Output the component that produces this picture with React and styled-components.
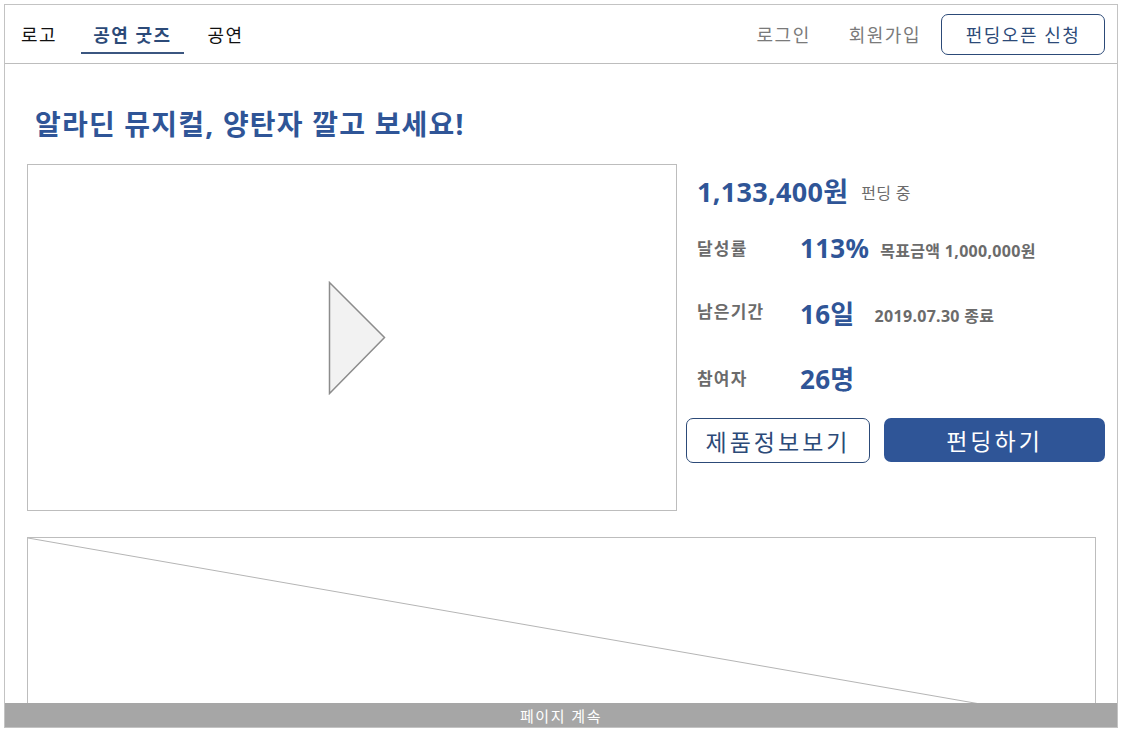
import styled, { createGlobalStyle } from "styled-components";

const GlobalStyle = createGlobalStyle`
  html, body {
    margin: 0;
    padding: 0;
    background: #fff;
  }
  body {
    padding: 4px;
    font-family: "Noto Sans", "Noto Sans CJK KR", sans-serif;
  }
`;

const BLUE = "#2f5597";
const NAVY = "#2c4a78";

const Frame = styled.div`
  position: relative;
  box-sizing: border-box;
  width: 1114px;
  height: 724px;
  border: 1px solid #c3c3c3;
  overflow: hidden;
  font-family: "Noto Sans", "Noto Sans CJK KR", sans-serif;
`;

const Header = styled.header`
  height: 58px;
  border-bottom: 1px solid #bdbdbd;
  display: flex;
  align-items: center;
  justify-content: space-between;
  padding: 0 12px 0 16px;
`;

const Nav = styled.nav`
  display: flex;
  align-items: stretch;
  height: 100%;
  gap: 36px;
`;

const NavItem = styled.a`
  display: flex;
  align-items: center;
  padding: 0 ${(p) => (p.$active ? "12px" : "0")};
  margin: 0 ${(p) => (p.$active ? "-12px" : "0")};
  font-size: 18px;
  letter-spacing: 1.5px;
  font-weight: ${(p) => (p.$active ? 700 : 400)};
  color: ${(p) => (p.$active ? NAVY : "#111")};
  text-decoration: none;
  position: relative;
  &::after {
    content: "";
    display: ${(p) => (p.$active ? "block" : "none")};
    position: absolute;
    left: 0;
    right: 0;
    bottom: 9px;
    height: 2px;
    background: #3b5680;
  }
`;

const Account = styled.div`
  display: flex;
  align-items: center;
`;

const AccountLink = styled.a`
  font-size: 18px;
  letter-spacing: 1.5px;
  color: #7a7a7a;
  text-decoration: none;
  margin-right: ${(p) => p.$gap}px;
`;

const OutlineButton = styled.button`
  box-sizing: border-box;
  height: ${(p) => p.$h || 40}px;
  width: ${(p) => p.$w}px;
  border: 1px solid ${NAVY};
  border-radius: 7px;
  background: #fff;
  color: ${NAVY};
  font-family: inherit;
  font-size: ${(p) => p.$size || 18}px;
  letter-spacing: ${(p) => p.$ls || 1.5}px;
  cursor: pointer;
`;

const FillButton = styled.button`
  box-sizing: border-box;
  height: 44px;
  flex: 1;
  border: none;
  border-radius: 7px;
  background: ${BLUE};
  color: #fff;
  font-family: inherit;
  font-size: 23px;
  letter-spacing: 3px;
  cursor: pointer;
`;

const Main = styled.main`
  padding: 0 12px 0 22px;
`;

const Title = styled.h1`
  margin: 0;
  padding: 46px 0 0 8px;
  height: 54px;
  font-size: 28px;
  font-weight: 700;
  color: ${BLUE};
  line-height: 1;
  letter-spacing: 1.2px;
`;

const Top = styled.section`
  display: flex;
  gap: 20px;
`;

const Video = styled.div`
  box-sizing: border-box;
  width: 650px;
  height: 347px;
  border: 1px solid #bdbdbd;
  display: flex;
  align-items: center;
  justify-content: center;
  svg {
    margin-left: 10px;
  }
`;

const Info = styled.div`
  flex: 1;
  display: flex;
  flex-direction: column;
`;

const Row = styled.div`
  display: flex;
  align-items: center;
  height: ${(p) => p.$h}px;
  box-sizing: border-box;
`;

const Label = styled.span`
  width: 103px;
  font-size: 17px;
  letter-spacing: 1.2px;
  font-weight: 700;
  color: #6b6b6b;
  margin-top: ${(p) => p.$dy || 0}px;
`;

const Big = styled.span`
  font-size: ${(p) => p.$size || 26}px;
  font-weight: 700;
  color: ${BLUE};
  letter-spacing: 0.3px;
  margin-right: ${(p) => p.$gap || 12}px;
`;

const Note = styled.span`
  font-size: 16px;
  letter-spacing: 0.3px;
  font-weight: ${(p) => (p.$bold ? 700 : 400)};
  color: #6b6b6b;
  margin-top: ${(p) => p.$dy || 0}px;
`;

const Actions = styled.div`
  display: flex;
  gap: 14px;
  margin: 8px 0 0 -11px;
`;

const Detail = styled.div`
  box-sizing: border-box;
  margin-top: 26px;
  width: 1069px;
  height: 188px;
  border: 1px solid #bdbdbd;
`;

const Footer = styled.footer`
  position: absolute;
  left: 0;
  right: 0;
  bottom: 0;
  height: 24px;
  background: #a6a6a6;
  color: #fff;
  font-size: 15px;
  letter-spacing: 1.5px;
  display: flex;
  align-items: center;
  justify-content: center;
`;

const PlayIcon = () => (
  <svg width="58" height="114" viewBox="0 0 58 114">
    <polygon
      points="1.5,1.5 56.5,56.5 1.5,112.5"
      fill="#f2f2f2"
      stroke="#8c8c8c"
      strokeWidth="1.5"
    />
  </svg>
);

const Diagonal = () => (
  <svg width="100%" height="100%" viewBox="0 0 100 100" preserveAspectRatio="none">
    <line
      x1="0"
      y1="0"
      x2="100"
      y2="100"
      stroke="#b5b5b5"
      strokeWidth="1"
      vectorEffect="non-scaling-stroke"
    />
  </svg>
);

export default function App() {
  return (
    <>
      <GlobalStyle />
      <Frame>
        <Header>
          <Nav>
            <NavItem href="#">로고</NavItem>
            <NavItem href="#" $active>
              공연 굿즈
            </NavItem>
            <NavItem href="#">공연</NavItem>
          </Nav>
          <Account>
            <AccountLink href="#" $gap={38}>
              로그인
            </AccountLink>
            <AccountLink href="#" $gap={20}>
              회원가입
            </AccountLink>
            <OutlineButton $w={164} $h={41} $size={18}>
              펀딩오픈 신청
            </OutlineButton>
          </Account>
        </Header>
        <Main>
          <Title>알라딘 뮤지컬, 양탄자 깔고 보세요!</Title>
          <Top>
            <Video>
              <PlayIcon />
            </Video>
            <Info>
              <Row $h={52}>
                <Big $size={27} $gap={13}>
                  1,133,400원
                </Big>
                <Note $dy={4}>펀딩 중</Note>
              </Row>
              <Row $h={64}>
                <Label $dy={-2}>달성률</Label>
                <Big $gap={11}>113%</Big>
                <Note $bold $dy={4}>
                  목표금액 1,000,000원
                </Note>
              </Row>
              <Row $h={66}>
                <Label $dy={-6}>남은기간</Label>
                <Big $gap={20}>16일</Big>
                <Note $bold $dy={4}>
                  2019.07.30 종료
                </Note>
              </Row>
              <Row $h={64}>
                <Label $dy={-2}>참여자</Label>
                <Big>26명</Big>
              </Row>
              <Actions>
                <OutlineButton $w={184} $h={45} $size={23} $ls={3}>
                  제품정보보기
                </OutlineButton>
                <FillButton>펀딩하기</FillButton>
              </Actions>
            </Info>
          </Top>
          <Detail>
            <Diagonal />
          </Detail>
        </Main>
        <Footer>페이지 계속</Footer>
      </Frame>
    </>
  );
}
